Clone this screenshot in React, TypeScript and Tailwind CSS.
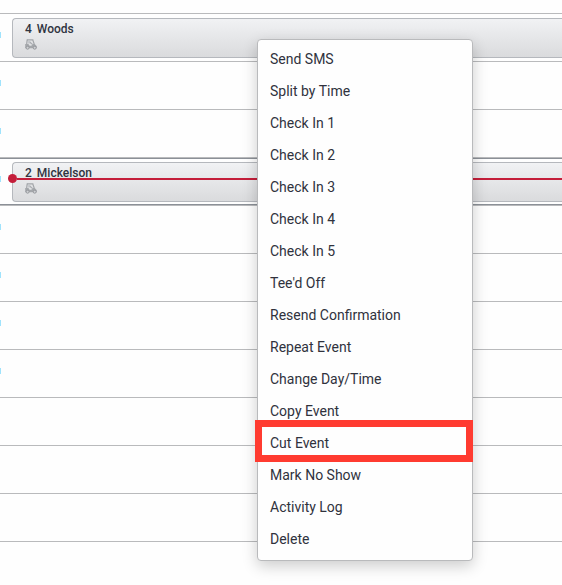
interface TeeEvent {
  players: number;
  name: string;
}

interface TeeSlot {
  id: number;
  event?: TeeEvent;
  current?: boolean;
  marked?: boolean;
}

const slots: TeeSlot[] = [
  { id: 1, marked: true, event: { players: 4, name: "Woods" } },
  { id: 2, marked: true },
  { id: 3, marked: true },
  { id: 4, marked: true, current: true, event: { players: 2, name: "Mickelson" } },
  { id: 5, marked: true },
  { id: 6, marked: true },
  { id: 7, marked: true },
  { id: 8, marked: true },
  { id: 9 },
  { id: 10 },
  { id: 11 },
];

const menuItems = [
  "Send SMS",
  "Split by Time",
  "Check In 1",
  "Check In 2",
  "Check In 3",
  "Check In 4",
  "Check In 5",
  "Tee'd Off",
  "Resend Confirmation",
  "Repeat Event",
  "Change Day/Time",
  "Copy Event",
  "Cut Event",
  "Mark No Show",
  "Activity Log",
  "Delete",
];

function CartIcon() {
  return (
    <svg width="12" height="11" viewBox="0 0 12 11" fill="none" className="block">
      <path d="M1.8 .9h6.6M2.2 .9 1.6 5.6M7.8 1l1.6 4.6" stroke="#a2a5a9" strokeWidth="1.2" />
      <path d="M3.2 2h2.2v2.6H3z" fill="#c3c6ca" />
      <path d="M.2 5h3.2l1.2 1.8h1.8L7.6 5h2.2l2 2.2v2H.2z" fill="#a4a7ab" />
      <path d="M5 3.2 7.4 5.4" stroke="#a9acb0" strokeWidth="1.2" />
      <circle cx="2.6" cy="8.7" r="1.5" fill="#cfd1d4" stroke="#97999d" />
      <circle cx="9.7" cy="8.7" r="1.5" fill="#cfd1d4" stroke="#97999d" />
    </svg>
  );
}

function EventCard({ event }: { event: TeeEvent }) {
  return (
    <div className="ml-3 h-10 flex-1 rounded-l border border-r-0 border-[#b5b8bd] bg-linear-to-b from-[#f1f2f4] to-[#dadbdd] pl-3">
      <div className="flex h-5 items-center gap-[5px] text-[12px] font-medium text-[#30343f]">
        <span>{event.players}</span>
        <span>{event.name}</span>
      </div>
      <CartIcon />
    </div>
  );
}

function SlotRow({ slot }: { slot: TeeSlot }) {
  return (
    <div className="relative flex h-12 items-start border-b border-[#b9babc]">
      {slot.current && (
        <div className="absolute inset-0 border-y border-[#8b9097]" />
      )}
      {slot.marked && (
        <div className="absolute top-[18px] left-0 h-1.5 w-px bg-[#a0e3fc]" />
      )}
      {slot.event && (
        <div className="relative flex flex-1 pt-1">
          <EventCard event={slot.event} />
        </div>
      )}
      {slot.current && (
        <div className="absolute top-4 right-0 left-2 flex h-[9px] items-center">
          <div className="size-[9px] rounded-full bg-[#c41e3a]" />
          <div className="h-0.5 flex-1 bg-[#c41e3a]" />
        </div>
      )}
    </div>
  );
}

function ContextMenu() {
  return (
    <ul className="absolute top-[39px] left-[257px] w-[216px] rounded border border-[#b9babc] bg-[#fefefe] pt-[3px] pb-[5px] shadow-[0_5px_15px_rgba(0,0,0,0.2)]">
      {menuItems.map((item) => (
        <li
          key={item}
          className="relative flex h-8 cursor-pointer items-center px-3 text-[14px] text-[#30323d]"
        >
          {item}
          {item === "Cut Event" && (
            <div className="absolute -top-[7px] -left-[3px] h-[42px] w-[218px] border-[7px] border-[#ff3b30]" />
          )}
        </li>
      ))}
    </ul>
  );
}

export default function App() {
  return (
    <div className="relative h-[585px] w-[562px] overflow-hidden bg-[#fefefe] font-['Roboto',sans-serif]">
      <div className="h-3.5 border-b border-[#b9babc]" />
      {slots.map((slot) => (
        <SlotRow key={slot.id} slot={slot} />
      ))}
      <ContextMenu />
    </div>
  );
}
